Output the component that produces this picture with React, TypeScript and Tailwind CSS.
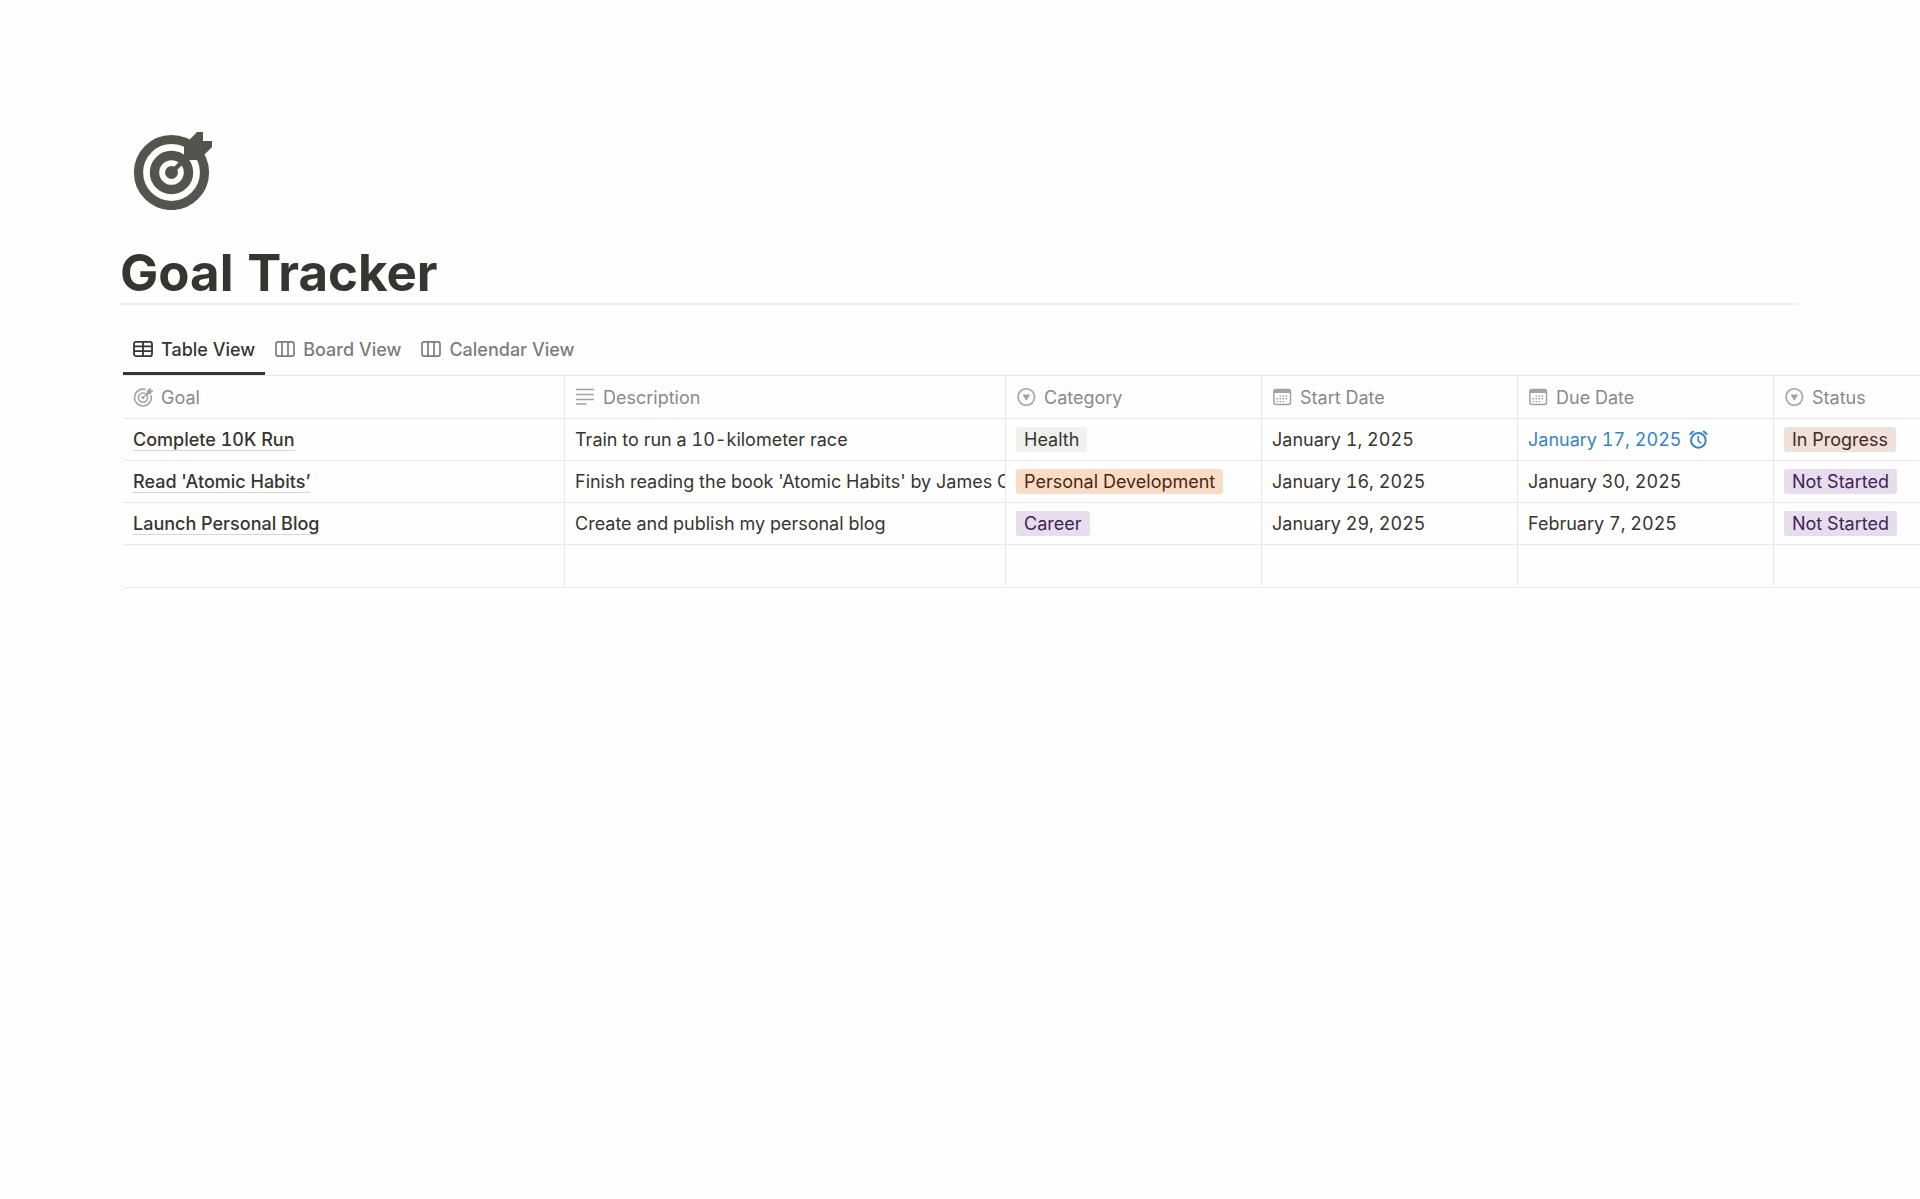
import React, { useState } from "react";

type IconProps = {
  className?: string;
};

type Tag = {
  label: string;
  color: string;
};

type Goal = {
  name: string;
  description: string;
  category: Tag;
  start: string;
  due: string;
  reminder?: boolean;
  status: Tag;
};

const TargetIcon: React.FC<IconProps> = ({ className }) => (
  <svg viewBox="0 0 80 80" fill="none" className={className} aria-hidden="true">
    <circle cx="38.5" cy="42.5" r="33" stroke="currentColor" strokeWidth="9.2" />
    <circle cx="38.5" cy="42.5" r="17" stroke="currentColor" strokeWidth="9.4" />
    <circle cx="38.5" cy="42.5" r="6.5" fill="currentColor" />
    <path d="M38.5 42.5 54 27" stroke="currentColor" strokeWidth="4.5" />
    <path
      d="M51 15.5 64 2h6v9h9v6L66 30H51Z"
      fill="currentColor"
    />
  </svg>
);

const SmallTargetIcon: React.FC<IconProps> = ({ className }) => (
  <svg viewBox="0 0 20 20" fill="none" className={className} aria-hidden="true">
    <path
      d="M12.6 2.6a8.4 8.4 0 1 0 5.4 5.6"
      stroke="currentColor"
      strokeWidth="1.6"
    />
    <circle cx="10" cy="10.6" r="4.6" stroke="currentColor" strokeWidth="1.6" />
    <circle cx="10" cy="10.6" r="1.5" fill="currentColor" />
    <path d="m10 10.6 5-5" stroke="currentColor" strokeWidth="1.3" />
    <path d="M13.6 4.2 16.8 1h1v2.2H20v1l-3.2 3.2h-3.2Z" fill="currentColor" />
  </svg>
);

const TableIcon: React.FC<IconProps> = ({ className }) => (
  <svg
    viewBox="0 0 20 20"
    fill="none"
    stroke="currentColor"
    strokeWidth="1.8"
    className={className}
    aria-hidden="true"
  >
    <rect x="1" y="2.9" width="18" height="14.2" rx="2.2" />
    <path d="M1 7.4h18M1 12.2h18M10 3v14" />
  </svg>
);

const BoardIcon: React.FC<IconProps> = ({ className }) => (
  <svg
    viewBox="0 0 20 20"
    fill="none"
    stroke="currentColor"
    strokeWidth="1.7"
    className={className}
    aria-hidden="true"
  >
    <rect x="1" y="2.9" width="18" height="14.2" rx="2.2" />
    <path d="M7 3v14M13 3v14" />
  </svg>
);

const TextIcon: React.FC<IconProps> = ({ className }) => (
  <svg
    viewBox="0 0 20 20"
    fill="none"
    stroke="currentColor"
    strokeWidth="1.5"
    className={className}
    aria-hidden="true"
  >
    <path d="M1 2.6h18M1 7.5h18M1 12.4h18M1 17h10.5" />
  </svg>
);

const SelectIcon: React.FC<IconProps> = ({ className }) => (
  <svg viewBox="0 0 20 20" fill="none" className={className} aria-hidden="true">
    <circle cx="10.3" cy="10" r="8.3" stroke="currentColor" strokeWidth="1.6" />
    <path
      d="M7.3 7.4h6c.5 0 .7.4.5.8l-3 4.8c-.3.4-.7.4-1 0l-3-4.8c-.2-.4 0-.8.5-.8Z"
      fill="currentColor"
    />
  </svg>
);

const DateIcon: React.FC<IconProps> = ({ className }) => (
  <svg viewBox="0 0 20 20" fill="none" className={className} aria-hidden="true">
    <rect
      x="1.9"
      y="2.6"
      width="16.6"
      height="15"
      rx="2"
      stroke="currentColor"
      strokeWidth="1.5"
    />
    <path d="M1.7 6V4a2 2 0 0 1 2-2h13a2 2 0 0 1 2 2v2Z" fill="currentColor" />
    <path
      d="M7.6 9h8.6M4.6 11.8h11.4M4.6 14.6h8.6"
      stroke="currentColor"
      strokeWidth="1.4"
      strokeDasharray="1.5 1.5"
    />
  </svg>
);

const AlarmIcon: React.FC<IconProps> = ({ className }) => (
  <svg
    viewBox="0 0 20 20"
    fill="none"
    stroke="currentColor"
    strokeWidth="2"
    strokeLinecap="round"
    className={className}
    aria-hidden="true"
  >
    <circle cx="9.4" cy="10.4" r="7.3" />
    <path d="M9.2 6.6v4.2l2.6 2" strokeWidth="1.6" />
    <path d="M1.3 4 4 1.6M17.5 4l-2.7-2.4" />
  </svg>
);

const views = [
  { label: "Table View", Icon: TableIcon },
  { label: "Board View", Icon: BoardIcon },
  { label: "Calendar View", Icon: BoardIcon },
];

const columns = [
  { label: "Goal", Icon: SmallTargetIcon, width: "w-[442px]" },
  { label: "Description", Icon: TextIcon, width: "w-[441px]" },
  { label: "Category", Icon: SelectIcon, width: "w-[256px]" },
  { label: "Start Date", Icon: DateIcon, width: "w-[256px]" },
  { label: "Due Date", Icon: DateIcon, width: "w-[256px]" },
  { label: "Status", Icon: SelectIcon, width: "w-[256px]" },
];

const gray = "bg-[#f0f0ef] text-[#373530]";
const orange = "bg-[#f9dcc6] text-[#49290e]";
const purple = "bg-[#e7dded] text-[#412454]";
const brown = "bg-[#eee0da] text-[#442a1e]";

const goals: Goal[] = [
  {
    name: "Complete 10K Run",
    description: "Train to run a 10-kilometer race",
    category: { label: "Health", color: gray },
    start: "January 1, 2025",
    due: "January 17, 2025",
    reminder: true,
    status: { label: "In Progress", color: brown },
  },
  {
    name: "Read 'Atomic Habits’",
    description: "Finish reading the book 'Atomic Habits' by James Clear",
    category: { label: "Personal Development", color: orange },
    start: "January 16, 2025",
    due: "January 30, 2025",
    status: { label: "Not Started", color: purple },
  },
  {
    name: "Launch Personal Blog",
    description: "Create and publish my personal blog",
    category: { label: "Career", color: purple },
    start: "January 29, 2025",
    due: "February 7, 2025",
    status: { label: "Not Started", color: purple },
  },
];

const TagLabel: React.FC<{ tag: Tag }> = ({ tag }) => (
  <div className="flex">
    <span className={`rounded-[3px] px-2 leading-[25px] ${tag.color}`}>
      {tag.label}
    </span>
  </div>
);

const Cell: React.FC<{ children?: React.ReactNode }> = ({ children }) => (
  <td className="overflow-hidden border-r border-b border-[#e9e9e7] px-[10px] whitespace-nowrap">
    {children}
  </td>
);

const App: React.FC = () => {
  const [activeView, setActiveView] = useState(0);

  return (
    <main className="min-h-screen overflow-hidden bg-[#fefefe] pt-[130px] font-['Inter',sans-serif] text-[18px] leading-[25px] text-[#373530] tabular-nums">
      <header className="mr-[122px] ml-[118px] border-b-2 border-[#f0f0ef]">
        <TargetIcon className="ml-[15px] h-[80px] w-[80px] text-[#55534e]" />
        <h1 className="pt-[33px] pl-[2px] text-[51px] leading-[60px] font-bold">
          Goal Tracker
        </h1>
      </header>

      <section className="mt-[21px] ml-[123px]">
        <div
          role="tablist"
          className="flex h-[50px] border-b border-[#e9e9e7]"
        >
          {views.map(({ label, Icon }, index) => (
            <button
              key={label}
              type="button"
              role="tab"
              aria-selected={activeView === index}
              className={`${
                activeView === index
                  ? "border-[#373530] text-[#373530]"
                  : "border-transparent text-[#7d7c78]"
              } flex items-center gap-2 border-b-3 px-[10px] font-medium`}
              onClick={() => setActiveView(index)}
            >
              <Icon className="h-5 w-5" />
              {label}
            </button>
          ))}
        </div>

        <table className="w-[1907px] table-fixed border-separate border-spacing-0">
          <thead>
            <tr className="h-[43px]">
              {columns.map(({ label, Icon, width }) => (
                <th
                  key={label}
                  scope="col"
                  className={`${width} border-r border-b border-[#e9e9e7] px-[10px] text-left font-normal text-[#8a8986]`}
                >
                  <div className="flex items-center gap-2">
                    <Icon className="h-5 w-5 text-[#a3a29f]" />
                    {label}
                  </div>
                </th>
              ))}
            </tr>
          </thead>
          <tbody>
            {goals.map((goal) => (
              <tr key={goal.name} className="h-[42px]">
                <Cell>
                  <a
                    href="#"
                    className="border-b border-[#d5d5d3] font-medium"
                  >
                    {goal.name}
                  </a>
                </Cell>
                <Cell>{goal.description}</Cell>
                <Cell>
                  <TagLabel tag={goal.category} />
                </Cell>
                <Cell>{goal.start}</Cell>
                <Cell>
                  {goal.reminder ? (
                    <span className="flex items-center gap-2 text-[#3784c6]">
                      {goal.due}
                      <AlarmIcon className="h-5 w-5" />
                    </span>
                  ) : (
                    goal.due
                  )}
                </Cell>
                <Cell>
                  <TagLabel tag={goal.status} />
                </Cell>
              </tr>
            ))}
            <tr className="h-[43px]">
              {columns.map(({ label }) => (
                <Cell key={label} />
              ))}
            </tr>
          </tbody>
        </table>
      </section>
    </main>
  );
};

export default App;
